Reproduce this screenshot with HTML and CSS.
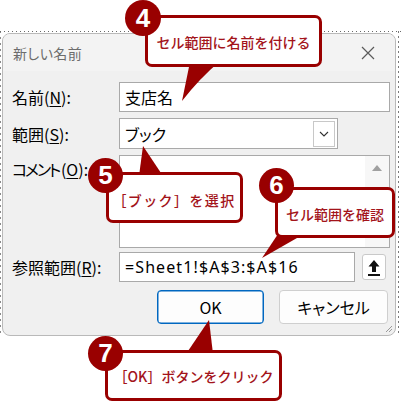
FILE: index.html
```html
<!DOCTYPE html>
<html lang="ja">
<head>
<meta charset="utf-8">
<title>新しい名前</title>
<link rel="stylesheet" href="styles.css">
</head>
<body>
<div class="stage">
  <div class="sheet">
    <div class="dialog">
      <div class="titlebar">
        <span class="title">新しい名前</span>
        <svg class="close" width="14" height="14" viewBox="0 0 14 14"><path d="M1 1L13 13M13 1L1 13" stroke="#5a5a5a" stroke-width="1.2" fill="none"/></svg>
      </div>
      <div class="body">
        <div class="row r1">
          <span class="lbl">名前(<u>N</u>):</span>
          <div class="field text wide">支店名</div>
        </div>
        <div class="row r2">
          <span class="lbl">範囲(<u>S</u>):</span>
          <div class="field combo">
            <span class="val">ブック</span>
            <span class="dd"><svg width="10" height="6" viewBox="0 0 10 6"><path d="M1 1L5 5L9 1" stroke="#333" stroke-width="1.1" fill="none"/></svg></span>
          </div>
        </div>
        <div class="row r3">
          <span class="lbl top"><span class="kana">コメント</span>(<u>O</u>):</span>
          <div class="field memo wide">
            <span class="scroll"><svg width="12" height="8" viewBox="0 0 12 8"><path d="M1 7L6 1L11 7Z" fill="#a0a0a0"/></svg></span>
          </div>
        </div>
        <div class="row r4">
          <span class="lbl">参照範囲(<u>R</u>):</span>
          <div class="refwrap">
            <div class="field text ref">=Sheet1!$A$3:$A$16</div>
            <span class="pick"><svg width="14" height="17" viewBox="0 0 14 17"><path d="M7 1L12.5 7.5H9V13H5V7.5H1.5Z" fill="#111"/><rect x="1" y="15" width="12" height="2" fill="#111"/></svg></span>
          </div>
        </div>
        <div class="buttons">
          <button class="btn primary">OK</button>
          <button class="btn">キャンセル</button>
        </div>
      </div>
      <svg class="grip" width="9" height="9" viewBox="0 0 9 9"><path d="M8 2L2 8M8 5L5 8" stroke="#9a9a9a" stroke-width="1" fill="none"/></svg>
    </div>
  </div>

  <svg class="tails" width="401" height="403" viewBox="0 0 401 403">
    <path d="M190 62L219 62Q200 78 182 101Z" fill="#990000"/>
    <path d="M139 176L163 176L143 146Z" fill="#990000"/>
    <path d="M278 234L304 234L262 258Z" fill="#990000"/>
    <path d="M186 354L213 354L209 320Z" fill="#990000"/>
  </svg>

  <div class="callout c4"><div class="box">セル範囲に名前を付ける</div><span class="num">4</span></div>
  <div class="callout c5"><div class="box">［ブック］を選択</div><span class="num">5</span></div>
  <div class="callout c6"><div class="box">セル範囲を確認</div><span class="num">6</span></div>
  <div class="callout c7"><div class="box">［OK］ボタンをクリック</div><span class="num">7</span></div>
</div>
</body>
</html>
```

FILE: styles.css
```css
* { box-sizing: border-box; }
html, body { margin: 0; padding: 0; background: #fff; }
body {
  font-family: "Noto Sans CJK JP", "Noto Sans", sans-serif;
  color: #000;
}
.stage {
  position: relative;
  width: 401px;
  height: 403px;
  overflow: hidden;
}
.sheet {
  margin-top: 31px;
  height: 305px;
  padding: 2px 5px 0 2px;
  background:
    repeating-linear-gradient(90deg, #6a6a6a 0 1px, transparent 1px 4px) 0 0 / 100% 1px no-repeat,
    repeating-linear-gradient(180deg, #7a7a7a 0 2px, transparent 2px 5px) 398px 0 / 1px 100% no-repeat,
    repeating-linear-gradient(180deg, #8a8a8a 0 2px, transparent 2px 6px) 0 0 / 1px 100% no-repeat;
}
.dialog {
  position: relative;
  width: 394px;
  height: 303px;
  border: 1px solid #b9b9b9;
  border-radius: 8px;
  background: #f0f0f0;
  overflow: hidden;
  display: flex;
  flex-direction: column;
  font-feature-settings: "palt";
}
.titlebar {
  height: 37px;
  flex: none;
  display: flex;
  align-items: center;
  padding-left: 10px;
  background: #f3f3f3;
}
.title {
  font-size: 14px;
  color: #6c6c6c;
  letter-spacing: 0.4px;
}
.close {
  margin-left: auto;
  margin-right: 20px;
}
.body {
  flex: 1;
  padding: 11px 5px 0 9px;
  display: flex;
  flex-direction: column;
}
.row {
  display: flex;
  align-items: center;
}
.r2 { margin-top: 6px; }
.r3 { margin-top: 6px; align-items: flex-start; }
.r4 { margin-top: 4px; }
.lbl {
  width: 107px;
  flex: none;
  font-size: 16px;
  line-height: 20px;
  white-space: nowrap;
}
.lbl u { text-underline-offset: 2px; }
.lbl.top { margin-top: 3px; line-height: 22px; }
.kana { letter-spacing: -2.2px; margin-right: 2px; }
.field {
  background: #fff;
  border: 1px solid #a9a9a9;
  font-size: 16px;
  padding-left: 5px;
}
.text {
  height: 30px;
  line-height: 28px;
}
.wide { width: 271px; }
.combo {
  width: 219px;
  height: 31px;
  display: flex;
  align-items: center;
  padding-right: 2px;
}
.combo .val { flex: 1; line-height: 28px; }
.dd {
  width: 22px;
  height: 26px;
  border: 1px solid #c8c8c8;
  background: #fff;
  display: flex;
  align-items: center;
  justify-content: center;
}
.memo {
  height: 93px;
  display: flex;
  justify-content: flex-end;
  padding: 0;
}
.scroll {
  width: 24px;
  background: #f7f7f7;
  display: flex;
  justify-content: center;
  padding-top: 8px;
}
.refwrap {
  width: 271px;
  display: flex;
  align-items: center;
}
.ref {
  width: 236px;
  font-family: "Noto Sans", "Noto Sans CJK JP", sans-serif;
  letter-spacing: 1.1px;
}
.pick {
  margin-left: 7px;
  width: 24px;
  height: 26px;
  background: #fff;
  border: 1px solid #c9c9c9;
  border-radius: 3px;
  display: flex;
  align-items: center;
  justify-content: center;
}
.buttons {
  margin-top: 8px;
  margin-right: 2px;
  display: flex;
  justify-content: flex-end;
  gap: 15px;
}
.btn {
  height: 34px;
  width: 109px;
  background: #fdfdfd;
  border: 1px solid #cfcfcf;
  border-radius: 4px;
  font-family: "Noto Sans CJK JP", sans-serif;
  font-feature-settings: "palt";
  font-size: 16px;
  color: #000;
  padding: 0;
}
.btn.primary {
  width: 107px;
  border: 1px solid #0067c0;
  box-shadow: inset 0 0 0 0.5px #0067c0;
}
.grip {
  position: absolute;
  right: 2px;
  bottom: 2px;
}
.tails {
  position: absolute;
  left: 0;
  top: 0;
}
.callout {
  position: absolute;
}
.callout .box {
  position: absolute;
  inset: 0;
  border: 3px solid #990000;
  border-radius: 7px;
  background: #fff;
  color: #a3141b;
  font-size: 14px;
  font-weight: 500;
  display: flex;
  align-items: center;
  justify-content: center;
  white-space: nowrap;
}
.num {
  position: absolute;
  width: 35px;
  height: 35px;
  border-radius: 50%;
  background: #990000;
  color: #fff;
  font-family: "Liberation Sans", Arial, sans-serif;
  font-weight: bold;
  font-size: 26px;
  line-height: 35px;
  text-align: center;
}
.c4 { left: 145px; top: 15px; width: 177px; height: 52px; }
.c4 .num { left: -20px; top: -15px; width: 36px; height: 36px; line-height: 36px; }
.c5 { left: 106px; top: 172px; width: 137px; height: 51px; }
.c5 .num { left: -18px; top: -14px; }
.c6 { left: 275px; top: 187px; width: 120px; height: 51px; }
.c6 .num { left: -16px; top: -19px; }
.c7 { left: 105px; top: 350px; width: 177px; height: 51px; }
.c7 .num { left: -17px; top: -14px; }
.c4 .box { padding-top: 2px; }
.c5 .box { padding-top: 4px; padding-right: 1px; letter-spacing: 1.4px; }
.c6 .box { padding-top: 2px; }
.c7 .box { padding-top: 0; }
```
